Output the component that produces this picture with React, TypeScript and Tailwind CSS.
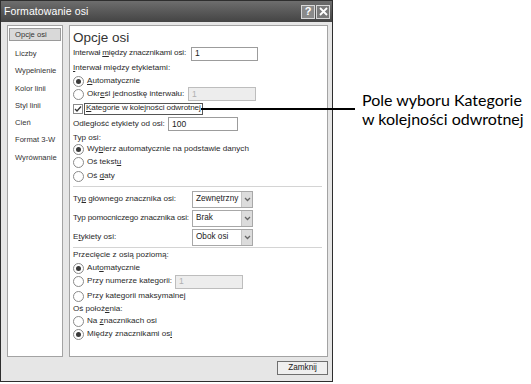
import React from 'react';

const font = { fontFamily: '"Liberation Sans", Arial, sans-serif' };

const Radio = ({ checked = false }: { checked?: boolean }) => (
  <span className="w-[11px] h-[11px] rounded-full border border-[#8a8a8a] bg-white flex items-center justify-center shrink-0">
    {checked && <span className="w-[5px] h-[5px] rounded-full bg-[#3a3a3a]" />}
  </span>
);

const Field = ({ value, disabled = false, className = '' }: { value: string; disabled?: boolean; className?: string }) => (
  <div
    className={`h-[14px] shrink-0 border flex items-center px-[3px] text-[8.5px] ${
      disabled ? 'bg-[#ededed] border-[#bdbdbd] text-[#b0b0b0]' : 'bg-white border-[#9c9c9c] text-[#222]'
    } ${className}`}
  >
    {value}
  </div>
);

const Select = ({ value }: { value: string }) => (
  <div className="w-[61px] h-[17px] shrink-0 border border-[#a8a8a8] bg-white flex items-stretch">
    <span className="flex-1 flex items-center px-[3px] text-[8.2px] text-[#222]">{value}</span>
    <span className="w-[11px] bg-[#dcdcdc] border-l border-[#c4c4c4] flex items-center justify-center">
      <svg width="7" height="5" viewBox="0 0 7 5">
        <path d="M1 1 L3.5 3.5 L6 1" stroke="#666" strokeWidth="1.3" fill="none" />
      </svg>
    </span>
  </div>
);

const RadioRow = ({ h, checked, children }: { h: string; checked?: boolean; children: React.ReactNode }) => (
  <div className={`${h} flex items-center gap-[3px]`}>
    <Radio checked={checked} />
    <span>{children}</span>
  </div>
);

const navItems = ['Liczby', 'Wypełnienie', 'Kolor linii', 'Styl linii', 'Cień', 'Format 3-W', 'Wyrównanie'];

const App = () => {
  return (
    <div className="relative w-[531px] h-[384px] bg-white flex whitespace-nowrap" style={font}>
      {/* Dialog */}
      <div className="w-[333px] h-[382px] border border-[#2e2e2e] bg-[#e6e6e6] flex flex-col">
        {/* Title bar */}
        <div className="h-[21px] bg-gradient-to-b from-[#6e6e6e] to-[#444] flex items-center justify-between pl-[3px] pr-[2px]">
          <span className="text-white text-[10.5px] tracking-[0.1px]">Formatowanie osi</span>
          <div className="flex gap-[1px]">
            <span className="w-[14px] h-[14px] border border-[#d8d8d8] bg-[#8a8a8a] text-white text-[11px] font-bold flex items-center justify-center leading-none">?</span>
            <span className="w-[14px] h-[14px] border border-[#d8d8d8] bg-[#7a7a7a] flex items-center justify-center">
              <svg width="9" height="9" viewBox="0 0 9 9">
                <path d="M1 1 L8 8 M8 1 L1 8" stroke="white" strokeWidth="1.8" />
              </svg>
            </span>
          </div>
        </div>

        {/* Body */}
        <div className="flex gap-[6px] px-[6px] pt-[3px] pr-[4px]">
          {/* Nav */}
          <div className="w-[56px] h-[332px] bg-white border border-[#a3a3a3] pt-[2px] px-[1px] text-[7.6px] text-[#333]">
            <div className="h-[13px] bg-[#d9d9d9] border border-[#9a9a9a] flex items-center pl-[5px] mb-[4px]">Opcje osi</div>
            {navItems.map((n) => (
              <div key={n} className="h-[17.3px] flex items-center pl-[6px]">
                {n}
              </div>
            ))}
          </div>

          {/* Right panel */}
          <div className="w-[259px] h-[332px] bg-white border border-[#a3a3a3] pt-[4px] pl-[3px] pr-[5px] text-[8.1px] text-[#2a2a2a]">
            <div className="h-[16px] flex items-center text-[13.5px] text-[#333]">Opcje osi</div>
            <div className="h-[15px] flex items-center">
              <span className="w-[118px] tracking-[-0.15px]">Interwał <u>m</u>iędzy znacznikami osi:</span>
              <Field value="1" className="w-[67px]" />
            </div>
            <div className="h-[14px] flex items-center">
              <span><u>I</u>nterwał między etykietami:</span>
            </div>
            <RadioRow h="h-[12px]" checked>
              <u>A</u>utomatycznie
            </RadioRow>
            <div className="h-[14px] flex items-center gap-[3px]">
              <Radio />
              <span className="w-[98px]">Okr<u>e</u>śl jednostkę interwału:</span>
              <Field value="1" disabled className="w-[68px]" />
            </div>
            <div className="h-[15px] flex items-center gap-[1px]">
              <span className="w-[10px] h-[10px] border border-[#8a8a8a] bg-white flex items-center justify-center">
                <svg width="8" height="8" viewBox="0 0 8 8">
                  <path d="M1 4 L3 6 L7 1.5" stroke="#333" strokeWidth="1.3" fill="none" />
                </svg>
              </span>
              <span className="h-[12px] border border-[#555] flex items-center px-[1px] tracking-[-0.1px]">
                <u>K</u>ategorie w kolejności odwrotnej
              </span>
            </div>
            <div className="h-[16px] flex items-center">
              <span className="w-[95px]">Odległość etykiety od osi:</span>
              <Field value="100" className="w-[70px]" />
            </div>
            <div className="h-[12px] flex items-center">Typ osi:</div>
            <RadioRow h="h-[11px]" checked>
              Wy<u>b</u>ierz automatycznie na podstawie danych
            </RadioRow>
            <RadioRow h="h-[14px]">
              Oś tekst<u>u</u>
            </RadioRow>
            <RadioRow h="h-[14px]">
              Oś <u>d</u>aty
            </RadioRow>
            <div className="my-[3px] h-px bg-[#d4d4d4]" />
            <div className="h-[19px] flex items-center">
              <span className="w-[119px]">Ty<u>p</u> głównego znacznika osi:</span>
              <Select value="Zewnętrzny" />
            </div>
            <div className="h-[19px] flex items-center">
              <span className="w-[119px] tracking-[-0.15px]">Typ pomocniczego znacznika osi:</span>
              <Select value="Brak" />
            </div>
            <div className="h-[19px] flex items-center">
              <span className="w-[119px]">E<u>t</u>ykiety osi:</span>
              <Select value="Obok osi" />
            </div>
            <div className="h-px bg-[#d4d4d4]" />
            <div className="h-[14px] flex items-center">Przecięcie z osią poziomą:</div>
            <RadioRow h="h-[12px]" checked>
              Aut<u>o</u>matycznie
            </RadioRow>
            <div className="h-[15px] flex items-center gap-[3px]">
              <Radio />
              <span className="w-[85px]">Przy numerze kategorii:</span>
              <Field value="1" disabled className="w-[68px]" />
            </div>
            <RadioRow h="h-[14px]">
              Przy kategorii maksymalne<u>j</u>
            </RadioRow>
            <div className="h-[12px] flex items-center">Oś położ<u>e</u>nia:</div>
            <RadioRow h="h-[13px]">
              Na <u>z</u>nacznikach osi
            </RadioRow>
            <RadioRow h="h-[12px]" checked>
              Między znacznikami os<u>i</u>
            </RadioRow>
          </div>
        </div>

        {/* Footer */}
        <div className="flex justify-end pr-[4px] pt-[4px]">
          <button className="w-[51px] h-[14px] border border-[#6f6f6f] bg-[#efefef] text-[8.2px] text-[#222] flex items-center justify-center">
            Zamknij
          </button>
        </div>
      </div>

      {/* Callout */}
      <div className="pl-[29px] pt-[90px] text-[16px] leading-[19px] text-black" style={{ fontFamily: 'Lato, "Open Sans", sans-serif' }}>
        <div>Pole wyboru Kategorie</div>
        <div>w kolejności odwrotnej</div>
      </div>
      <div className="absolute left-[201px] top-[108px] w-[154px] h-[2px] bg-black" />
    </div>
  );
};

export default App;
